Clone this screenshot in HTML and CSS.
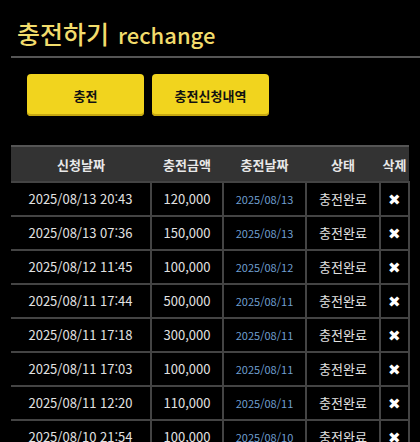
FILE: index.html
```html
<!DOCTYPE html>
<html lang="ko">
<head>
<meta charset="utf-8">
<link rel="stylesheet" href="styles.css">
</head>
<body>
<div class="page">
  <h1 class="title"><span class="ko">충전하기</span> <span class="en">rechange</span></h1>
  <div class="buttons">
    <button class="btn">충전</button>
    <button class="btn">충전신청내역</button>
  </div>
  <table class="list">
    <colgroup>
      <col class="c1"><col class="c2"><col class="c3"><col class="c4"><col class="c5">
    </colgroup>
    <thead>
      <tr><th>신청날짜</th><th>충전금액</th><th>충전날짜</th><th>상태</th><th>삭제</th></tr>
    </thead>
    <tbody>
      <tr><td>2025/08/13 20:43</td><td>120,000</td><td class="d">2025/08/13</td><td>충전완료</td><td class="x">✖</td></tr>
      <tr><td>2025/08/13 07:36</td><td>150,000</td><td class="d">2025/08/13</td><td>충전완료</td><td class="x">✖</td></tr>
      <tr><td>2025/08/12 11:45</td><td>100,000</td><td class="d">2025/08/12</td><td>충전완료</td><td class="x">✖</td></tr>
      <tr><td>2025/08/11 17:44</td><td>500,000</td><td class="d">2025/08/11</td><td>충전완료</td><td class="x">✖</td></tr>
      <tr><td>2025/08/11 17:18</td><td>300,000</td><td class="d">2025/08/11</td><td>충전완료</td><td class="x">✖</td></tr>
      <tr><td>2025/08/11 17:03</td><td>100,000</td><td class="d">2025/08/11</td><td>충전완료</td><td class="x">✖</td></tr>
      <tr><td>2025/08/11 12:20</td><td>110,000</td><td class="d">2025/08/11</td><td>충전완료</td><td class="x">✖</td></tr>
      <tr><td>2025/08/10 21:54</td><td>100,000</td><td class="d">2025/08/10</td><td>충전완료</td><td class="x">✖</td></tr>
    </tbody>
  </table>
</div>
</body>
</html>
```
FILE: styles.css
```css
html, body {
  margin: 0;
  padding: 0;
  background: #000;
}
body {
  font-family: "Noto Sans CJK KR", "Noto Sans", sans-serif;
  color: #e6e6e6;
  overflow: hidden;
}
.page {
  padding: 0 0 0 11px;
}
.title {
  margin: 0;
  padding: 12px 0 8px 6px;
  border-bottom: 2px solid #555;
  color: #f2dc6c;
  font-weight: 500;
  line-height: 36px;
  height: 36px;
}
.title .ko {
  font-size: 25px;
}
.title .en {
  font-size: 22px;
}
.buttons {
  display: flex;
  gap: 8px;
  padding: 16px 0 0 16px;
  height: 87px;
  box-sizing: border-box;
}
.btn {
  width: 117px;
  height: 42px;
  border: none;
  border-radius: 4px;
  background: #f1d41e;
  box-shadow: inset 0 -2px 0 #c7a810, 0 1px 2px rgba(0,0,0,.5);
  font-family: "Noto Sans CJK KR", sans-serif;
  font-weight: 700;
  font-size: 13px;
  color: #111;
  padding: 0;
}
.list {
  width: 398px;
  border-collapse: collapse;
  table-layout: fixed;
  border-top: 2px solid #555;
}
.c1 { width: 140px; }
.c2 { width: 72px; }
.c3 { width: 83px; }
.c4 { width: 74px; }
.c5 { width: 29px; }
.list th {
  background: #333;
  height: 34px;
  padding: 0;
  font-size: 13px;
  font-weight: 700;
  color: #e8e8e8;
  text-align: center;
  white-space: nowrap;
  border-bottom: 2px solid #444;
}
.list td {
  height: 32px;
  padding: 0;
  border: 2px solid #444;
  text-align: center;
  font-size: 13px;
  line-height: 18px;
  color: #e2e2e2;
  white-space: nowrap;
}
.list td:first-child { border-left: none; }
.list td.d {
  color: #6f9fd0;
  font-size: 11px;
}
.list td.x {
  font-size: 15px;
  line-height: 18px;
  color: #fff;
}
.list td.x::before {
  content: "";
}
```
